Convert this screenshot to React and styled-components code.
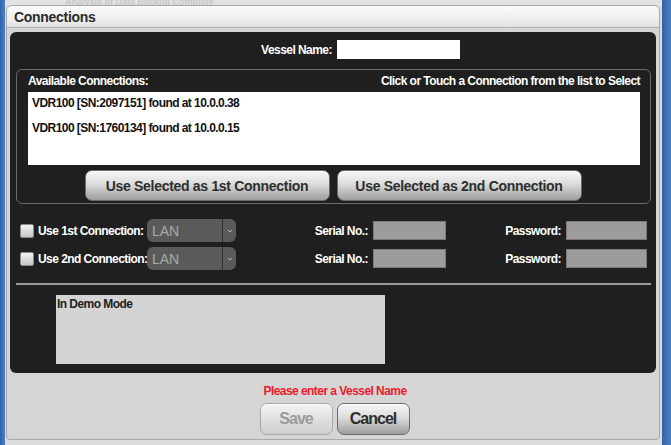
import React from 'react'
import styled, { createGlobalStyle } from 'styled-components'

const SANS = `"Liberation Sans Narrow", "Arial Narrow", "Liberation Sans", Arial, sans-serif`

const GlobalStyle = createGlobalStyle`
  html, body {
    margin: 0;
    padding: 0;
    width: 671px;
    height: 445px;
    overflow: hidden;
    background: #3a6fb0;
  }
  body {
    font-family: ${SANS};
  }
`

const Page = styled.div`
  display: grid;
  grid-template-columns: 5px 1fr 9px;
  width: 671px;
  height: 445px;
`

const BlueEdge = styled.div`
  background: linear-gradient(to right, #2f62a8, #4a82c6);
`

const Center = styled.div`
  display: flex;
  flex-direction: column;
  background: #dcdcdc;
  min-width: 0;
`

const BehindStrip = styled.div`
  height: 5px;
  overflow: hidden;
  color: #c8c8c8;
  font-size: 9px;
  font-weight: bold;
  line-height: 5px;
  padding-left: 60px;
  background: #e2e2e2;
`

const Dialog = styled.div`
  margin: 0 2px 0 1px;
  height: 435px;
  box-sizing: border-box;
  background: #d5d5d5;
  border: 1px solid #a9a9a9;
  border-radius: 6px 6px 4px 4px;
  display: flex;
  flex-direction: column;
  overflow: hidden;
`

const TitleBar = styled.div`
  height: 21px;
  background: linear-gradient(#fbfbfb, #ececec 70%, #e2e2e2);
  border-bottom: 1px solid #b4b4b4;
  font-weight: bold;
  font-size: 14px;
  letter-spacing: -0.3px;
  color: #2a2a2a;
  padding-left: 7px;
  line-height: 22px;
`

const DarkPanel = styled.div`
  margin: 4px 3px 0 3px;
  background: #1f1f1f;
  border-radius: 6px;
  padding: 8px 5px 9px 6px;
  color: #fff;
  font-weight: bold;
  font-size: 12px;
  letter-spacing: -0.55px;
`

const VesselRow = styled.div`
  display: flex;
  justify-content: center;
  align-items: center;
  gap: 5px;
  height: 19px;
  padding-left: 54px;
`

const WhiteInput = styled.div`
  width: 123px;
  height: 19px;
  background: #fff;
`

const Fieldset = styled.div`
  margin-top: 10px;
  border: 1px solid #6a6a6a;
  border-radius: 6px;
  padding: 0 10px 2px 11px;
`

const FieldsetHead = styled.div`
  display: flex;
  justify-content: space-between;
  align-items: center;
  height: 22px;
`

const List = styled.div`
  background: #fff;
  height: 73px;
  padding: 4px 4px;
  box-sizing: border-box;
  color: #111;
`

const ListItem = styled.div`
  height: 25px;
  line-height: 15px;
`

const ButtonRow = styled.div`
  display: flex;
  justify-content: center;
  gap: 7px;
  margin-top: 5px;
  padding-right: 2px;
`

const GrayButton = styled.div`
  width: ${(p) => p.$w}px;
  height: ${(p) => p.$h}px;
  box-sizing: border-box;
  flex-shrink: 0;
  border: 1px solid ${(p) => (p.$disabled ? '#a8a8a8' : '#6b6b6b')};
  border-radius: 7px;
  background: ${(p) =>
    p.$disabled
      ? 'linear-gradient(#f4f4f4, #dedede 55%, #cfcfcf)'
      : 'linear-gradient(#f7f7f7, #dcdcdc 45%, #b4b4b4 80%, #9e9e9e)'};
  box-shadow: inset 0 1px 0 #fff;
  color: ${(p) => (p.$disabled ? '#9a9a9a' : '#2e2e2e')};
  font-weight: bold;
  font-size: ${(p) => p.$fs}px;
  letter-spacing: ${(p) => p.$ls}px;
  display: flex;
  align-items: center;
  justify-content: center;
`

const OptionRows = styled.div`
  display: flex;
  flex-direction: column;
  gap: 5px;
  margin-top: 15px;
  padding-left: 4px;
`

const OptionRow = styled.div`
  display: flex;
  align-items: center;
  height: 23px;
`

const CheckLabel = styled.label`
  width: 127px;
  flex-shrink: 0;
  display: flex;
  align-items: center;
  gap: 4px;
  white-space: nowrap;
`

const Checkbox = styled.span`
  width: 14px;
  height: 14px;
  flex-shrink: 0;
  box-sizing: border-box;
  border: 1px solid #8a8a8a;
  border-radius: 2px;
  background: linear-gradient(#f2f2f2, #c6c6c6);
`

const Select = styled.div`
  width: 89px;
  height: 23px;
  flex-shrink: 0;
  box-sizing: border-box;
  border-radius: 6px;
  background: #5a5a5a;
  display: flex;
  align-items: stretch;
  color: #a9a9a9;
  font-size: 14px;
  font-weight: normal;
  letter-spacing: 0;
`

const SelectText = styled.span`
  flex: 1;
  display: flex;
  align-items: center;
  padding-left: 5px;
  border-right: 1px solid #2e2e2e;
`

const SelectArrow = styled.span`
  width: 13px;
  display: flex;
  align-items: center;
  justify-content: center;
`

const Field = styled.div`
  width: ${(p) => p.$w}px;
  flex-shrink: 0;
  display: flex;
  justify-content: flex-end;
  align-items: center;
  gap: 5px;
`

const GrayInput = styled.div`
  width: ${(p) => p.$w}px;
  height: 19px;
  box-sizing: border-box;
  background: #9c9c9c;
  border: 1px solid #7a7a7a;
`

const Divider = styled.div`
  margin-top: 13px;
  height: 2px;
  background: #9a9a9a;
`

const DemoBox = styled.div`
  margin: 10px 0 0 40px;
  width: 329px;
  height: 69px;
  box-sizing: border-box;
  background: #d4d4d4;
  color: #222;
  padding: 2px 1px;
`

const Footer = styled.div`
  display: flex;
  flex-direction: column;
  align-items: center;
  padding-top: 11px;
`

const ErrorText = styled.div`
  color: #ee1b2e;
  font-weight: bold;
  font-size: 12px;
  letter-spacing: -0.55px;
  height: 15px;
  line-height: 15px;
  padding-left: 4px;
`

const FooterButtons = styled.div`
  display: flex;
  gap: 4px;
  margin-top: 4px;
  padding-left: 3px;
`

function Arrow() {
  return (
    <svg width='6' height='4' viewBox='0 0 6 4'>
      <path d='M1 1 L3 3 L5 1' stroke='#b5b5b5' strokeWidth='1' fill='none' />
    </svg>
  )
}

function ConnectionRow({ label }) {
  return (
    <OptionRow>
      <CheckLabel>
        <Checkbox />
        {label}
      </CheckLabel>
      <Select>
        <SelectText>LAN</SelectText>
        <SelectArrow>
          <Arrow />
        </SelectArrow>
      </Select>
      <Field $w={210}>
        Serial No.:
        <GrayInput $w={73} />
      </Field>
      <Field $w={201}>
        Password:
        <GrayInput $w={81} />
      </Field>
    </OptionRow>
  )
}

export default function App() {
  return (
    <Page>
      <GlobalStyle />
      <BlueEdge />
      <Center>
        <BehindStrip>Analysis of Data Backup Complete</BehindStrip>
        <Dialog>
          <TitleBar>Connections</TitleBar>
          <DarkPanel>
            <VesselRow>
              Vessel Name:
              <WhiteInput />
            </VesselRow>
            <Fieldset>
              <FieldsetHead>
                <span>Available Connections:</span>
                <span>Click or Touch a Connection from the list to Select</span>
              </FieldsetHead>
              <List>
                <ListItem>VDR100 [SN:2097151] found at 10.0.0.38</ListItem>
                <ListItem>VDR100 [SN:1760134] found at 10.0.0.15</ListItem>
              </List>
              <ButtonRow>
                <GrayButton $w={245} $h={31} $fs={14} $ls={-0.3}>
                  Use Selected as 1st Connection
                </GrayButton>
                <GrayButton $w={245} $h={31} $fs={14} $ls={-0.3}>
                  Use Selected as 2nd Connection
                </GrayButton>
              </ButtonRow>
            </Fieldset>
            <OptionRows>
              <ConnectionRow label='Use 1st Connection:' />
              <ConnectionRow label='Use 2nd Connection:' />
            </OptionRows>
            <Divider />
            <DemoBox>In Demo Mode</DemoBox>
          </DarkPanel>
          <Footer>
            <ErrorText>Please enter a Vessel Name</ErrorText>
            <FooterButtons>
              <GrayButton $w={73} $h={32} $fs={16} $ls={-1} $disabled>
                Save
              </GrayButton>
              <GrayButton $w={73} $h={32} $fs={16} $ls={-1}>
                Cancel
              </GrayButton>
            </FooterButtons>
          </Footer>
        </Dialog>
      </Center>
      <BlueEdge />
    </Page>
  )
}
